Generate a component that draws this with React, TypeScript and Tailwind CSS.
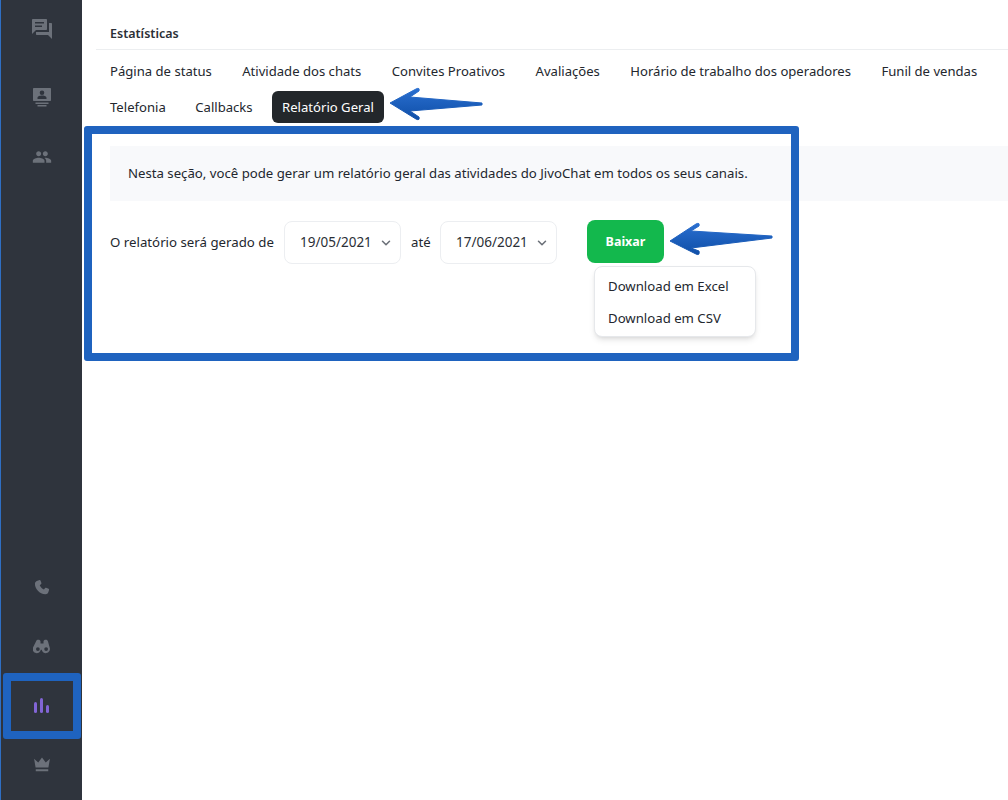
import React from 'react';
import { ChevronDown } from 'lucide-react';

const tabsTop = ['Página de status', 'Atividade dos chats', 'Convites Proativos', 'Avaliações', 'Horário de trabalho dos operadores', 'Funil de vendas'];

const Glyph = ({ d, className }: { d: string; className: string }) => (
  <svg viewBox="0 0 24 24" fill="currentColor" className={className}>
    <path fillRule="evenodd" d={d} />
  </svg>
);

const Arrow = ({ d, className }: { d: string; className: string }) => (
  <svg viewBox="0 0 104 34" className={className}>
    <defs>
      <linearGradient id="arrowFill" x1="0" y1="0" x2="0" y2="1">
        <stop offset="0" stopColor="#2a6fd0" />
        <stop offset="1" stopColor="#0f4fa8" />
      </linearGradient>
    </defs>
    <path d={d} fill="url(#arrowFill)" stroke="url(#arrowFill)" strokeWidth="1" strokeLinejoin="round" />
  </svg>
);

const DateSelect = ({ value }: { value: string }) => (
  <div className="flex h-[43px] w-[117px] items-center rounded-lg border border-[#eceef1] bg-white pl-[15px] pr-[7px] text-[13.5px] text-[#2b2f36]">
    <span className="flex-1">{value}</span>
    <ChevronDown className="h-[14px] w-[14px] text-[#6b7078]" strokeWidth={2.6} />
  </div>
);

const App = () => {
  return (
    <div className="relative flex h-[800px] w-[1008px] overflow-hidden bg-white text-[13.2px] text-[#23272e] font-['Noto_Sans',sans-serif]">
      <aside className="flex w-[82px] shrink-0 flex-col items-center border-l border-[#2f6fc4] bg-[#2f343d] text-[#6c717a]">
        <Glyph className="mt-[17px] h-[24px] w-[24px]" d="M3 2h13c.6 0 1 .4 1 1v9c0 .6-.4 1-1 1H6l-4 4V3c0-.6.4-1 1-1zm2 3v1.600h9V5H5zm0 3.400V10h7V8.400H5zM19 6h2c.6 0 1 .4 1 1v15l-4-4H7c-.6 0-1-.4-1-1v-2h13V6z" />
        <Glyph className="mt-[44px] h-[24px] w-[24px]" d="M4 3h16c.6 0 1 .4 1 1v11c0 .6-.4 1-1 1H4c-.6 0-1-.4-1-1V4c0-.6.4-1 1-1zm8 2.500a2.300 2.300 0 100 4.600 2.300 2.300 0 000-4.600zM7.500 14h9v-1.200c0-1.500-3-2.200-4.500-2.200s-4.500.7-4.500 2.200V14zM5.500 17.500h13V19h-13zM7.500 20h9v1.500h-9z" />
        <Glyph className="mt-[38px] h-[20px] w-[20px]" d="M16 11c1.660 0 2.990-1.340 2.990-3S17.660 5 16 5c-1.660 0-3 1.340-3 3s1.340 3 3 3zm-8 0c1.660 0 2.990-1.340 2.990-3S9.660 5 8 5C6.340 5 5 6.340 5 8s1.340 3 3 3zm0 2c-2.330 0-7 1.170-7 3.500V19h14v-2.500c0-2.330-4.670-3.500-7-3.500zm8 0c-.290 0-.620.020-.970.050 1.160.840 1.970 1.970 1.970 3.450V19h6v-2.500c0-2.330-4.670-3.500-7-3.500z" />
        <Glyph className="mt-auto h-[20px] w-[20px]" d="M6.600 3.200 9 2.500c.5-.1 1 .1 1.200.6l1.100 3c.1.4 0 .8-.3 1.100L9.300 8.700c.9 2.300 2.700 4.100 5 5l1.500-1.700c.3-.3.7-.4 1.100-.3l3 1.100c.5.2.7.7.6 1.200l-.7 2.400c-.3 1.200-1.300 3.100-3.800 3.100C9 19.500 3.500 13 3.500 7c0-2.500 1.900-3.500 3.100-3.800z" />
        <Glyph className="mt-[39px] h-[18px] w-[18px]" d="M7 3.500c1.700 0 3 .9 3 2.500v2.500h4V6c0-1.600 1.300-2.500 3-2.500s2.600.8 3 2.500l2.500 9a5.500 5.500 0 01-10.900 2h-1.200a5.500 5.500 0 01-10.900-2L4 6c.4-1.700 1.300-2.500 3-2.500zM6.500 13.500a2.500 2.500 0 100 5 2.500 2.500 0 000-5zm11 0a2.500 2.500 0 100 5 2.500 2.500 0 000-5z" />
        <div className="mt-[36px] flex h-[22px] w-[24px] items-end justify-center gap-[3px]">
          <span className="h-[11px] w-[3px] rounded-sm bg-[#8265d6]" />
          <span className="h-[15px] w-[3px] rounded-sm bg-[#8265d6]" />
          <span className="h-[8px] w-[3px] rounded-sm bg-[#8265d6]" />
        </div>
        <Glyph className="mb-[25px] mt-[42px] h-[20px] w-[20px]" d="M2.500 4.500l5 4.500L12 3l4.500 6 5-4.500L19.700 15H4.300L2.500 4.500zM4.500 17h15v2.500h-15V17z" />
      </aside>

      <main className="flex min-w-0 flex-1 flex-col pl-[14px]">
        <div className="flex h-[50px] items-end border-b border-[#eceef0] pb-[5px] pl-[14px] text-[12.5px] font-semibold text-[#2b2f36]">
          Estatísticas
        </div>
        <div className="flex flex-col gap-[4px] pl-[4px] pt-[5px] text-[13.1px]">
          <div className="flex h-[32px] items-center gap-[10.4px] pt-[1px]">
            {tabsTop.map((t) => (
              <div key={t} className="whitespace-nowrap px-[10px]">{t}</div>
            ))}
          </div>
          <div className="flex h-[32px] items-center gap-[9.5px]">
            <div className="px-[10px] pt-[1px]">Telefonia</div>
            <div className="px-[10px] pt-[1px]">Callbacks</div>
            <div className="flex h-[32px] items-center rounded-md bg-[#23272b] px-[10px] pt-[1px] text-white">Relatório Geral</div>
          </div>
        </div>
        <div className="ml-[14px] mt-[23px] flex h-[55px] items-center bg-[#f8f9fb] pl-[18px]">
          Nesta seção, você pode gerar um relatório geral das atividades do JivoChat em todos os seus canais.
        </div>
        <div className="relative ml-[14px] mt-[20px] flex items-center">
          <span className="w-[174px] text-[13.25px]">O relatório será gerado de</span>
          <DateSelect value="19/05/2021" />
          <span className="w-[39px] pl-[10px]">até</span>
          <DateSelect value="17/06/2021" />
          <button className="ml-[30px] flex h-[43px] w-[77px] -translate-y-[1px] items-center justify-center rounded-lg bg-[#13b84d] pt-[2px] text-[12.5px] font-bold text-white">Baixar</button>
          <div className="absolute left-[484px] top-[45px] flex h-[71px] w-[162px] flex-col justify-center gap-[12px] rounded-lg border border-[#e6e8eb] bg-white pl-[13px] pt-[2px] shadow-md">
            <div>Download em Excel</div>
            <div>Download em CSV</div>
          </div>
        </div>
      </main>

      {/* annotations on top of the screenshot */}
      <div className="pointer-events-none absolute left-[84px] top-[126px] h-[235px] w-[715px] rounded-[3px] border-[8px] border-[#1f63bf]" />
      <div className="pointer-events-none absolute left-[3px] top-[673px] h-[66px] w-[78px] rounded-[3px] border-[8px] border-[#1f63bf]" />
      <Arrow className="absolute left-[389px] top-[87px] h-[34px] w-[104px]" d="M1 16 L27 2 Q31 0 30 4 L21 10 L93 16 L93 18 L21 24 L30 30 Q31 34 27 32 Z" />
      <Arrow className="absolute left-[669px] top-[222px] h-[34px] w-[104px]" d="M1 19 L27 2 Q31 0 30 4 L22 9 L103 14 L103 16 L22 26 L30 29 Q31 34 27 32 Z" />
    </div>
  );
};

export default App;
